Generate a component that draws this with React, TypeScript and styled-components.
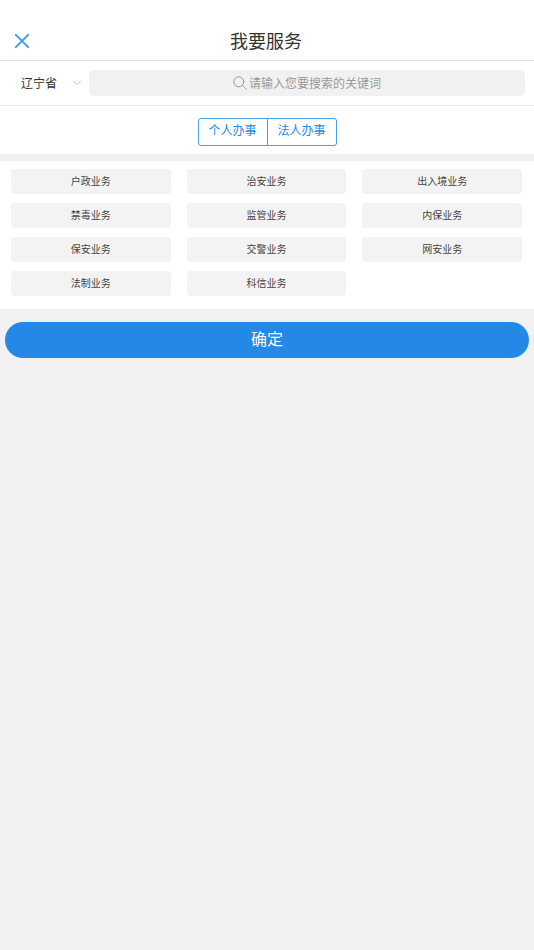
import React, { useState } from "react";
import styled, { createGlobalStyle } from "styled-components";

const GlobalStyle = createGlobalStyle`
  *, *::before, *::after { box-sizing: border-box; }
  body {
    margin: 0;
    background: #f1f1f1;
    color: #333;
    font-family: "Noto Sans CJK SC", "Noto Sans", sans-serif;
  }
  button, input, select { font: inherit; color: inherit; margin: 0; }
  button { cursor: pointer; }
`;

const Header = styled.header`
  display: grid;
  grid-template-columns: 43px 1fr 45px;
  align-items: center;
  height: 61px;
  padding-top: 20px;
  background: #fff;
  border-bottom: 1px solid #e4e4e4;
`;

const CloseButton = styled.button`
  display: flex;
  align-items: center;
  justify-content: center;
  height: 40px;
  padding: 2px 0 0;
  border: 0;
  background: none;
  color: #3d9af2;
`;

const Title = styled.h1`
  margin: 0;
  font-size: 18px;
  line-height: 26px;
  font-weight: 400;
  text-align: center;
`;

const SearchRow = styled.form`
  display: flex;
  align-items: center;
  height: 45px;
  padding-right: 9px;
  background: #fff;
  border-bottom: 1px solid #ececec;
`;

const Province = styled.label`
  display: flex;
  flex: none;
  align-items: center;
  justify-content: space-between;
  width: 89px;
  padding: 0 7px 0 21px;
  color: #c4c4c4;
`;

const ProvinceSelect = styled.select`
  appearance: none;
  padding: 0;
  border: 0;
  background: none;
  color: #333;
  font-size: 12px;
  line-height: 20px;
`;

const SearchBox = styled.label`
  display: flex;
  flex: 1;
  align-items: center;
  justify-content: center;
  gap: 2px;
  height: 26px;
  border-radius: 5px;
  background: #f1f1f1;
  color: #999;
`;

const SearchInput = styled.input`
  field-sizing: content;
  min-width: 0;
  height: 20px;
  padding: 0;
  border: 0;
  outline: 0;
  background: none;
  color: #333;
  font-size: 12px;
  line-height: 20px;
  &::placeholder { color: #999; opacity: 1; }
`;

const TabBar = styled.div`
  display: flex;
  justify-content: center;
  padding: 12px 0 8px;
  background: #fff;
`;

const TabGroup = styled.div`
  display: flex;
  border: 1px solid #4c9fe9;
  border-radius: 3px;
`;

const Tab = styled.button`
  width: 68px;
  height: 26px;
  padding: 0 0 4px;
  border: 0;
  background: none;
  color: #2388e6;
  font-size: 12px;
  line-height: 20px;
  & + & {
    width: 69px;
    border-left: 1px solid #4c9fe9;
  }
`;

const ServicePanel = styled.section`
  display: grid;
  grid-template-columns: repeat(3, 1fr);
  gap: 9px 16px;
  margin-top: 7px;
  padding: 8px 12px 13px 11px;
  background: #fff;
`;

const ServiceButton = styled.button`
  height: 25px;
  padding: 0 0 2px;
  border: 0;
  border-radius: 4px;
  background: #f3f3f3;
  color: #444;
  font-size: 10px;
  line-height: 20px;
`;

const Footer = styled.footer`
  padding: 13px 5px;
`;

const ConfirmButton = styled.button`
  display: block;
  width: 100%;
  height: 36px;
  padding: 0 0 4px;
  border: 0;
  border-radius: 18px;
  background: #2388e6;
  color: #fff;
  font-size: 16px;
  line-height: 24px;
`;

const tabs = ["个人办事", "法人办事"];

const services = [
  "户政业务", "治安业务", "出入境业务",
  "禁毒业务", "监管业务", "内保业务",
  "保安业务", "交警业务", "网安业务",
  "法制业务", "科信业务",
];

const CloseIcon = () => (
  <svg width="16" height="16" viewBox="0 0 16 16" fill="none" stroke="currentColor" strokeWidth="1.9" strokeLinecap="round" aria-hidden="true">
    <path d="M1.8 1.8 14.2 14.2M14.2 1.8 1.8 14.2" />
  </svg>
);

const ChevronIcon = () => (
  <svg width="10" height="6" viewBox="0 0 10 6" fill="none" stroke="currentColor" strokeWidth="1" aria-hidden="true">
    <path d="M1 0.8 5 4.8 9 0.8" />
  </svg>
);

const SearchIcon = () => (
  <svg width="14" height="14" viewBox="0 0 14 14" fill="none" stroke="currentColor" strokeWidth="1" strokeLinecap="round" aria-hidden="true">
    <circle cx="5.8" cy="5.8" r="5" />
    <path d="M9.5 9.5 13.4 13.4" />
  </svg>
);

export default function App() {
  const [keyword, setKeyword] = useState("");
  return (
    <>
      <GlobalStyle />
      <Header>
        <CloseButton type="button" aria-label="关闭"><CloseIcon /></CloseButton>
        <Title>我要服务</Title>
      </Header>
      <main>
        <SearchRow role="search" onSubmit={(e) => e.preventDefault()}>
          <Province>
            <ProvinceSelect aria-label="省份" defaultValue="辽宁省">
              <option>辽宁省</option>
            </ProvinceSelect>
            <ChevronIcon />
          </Province>
          <SearchBox>
            <SearchIcon />
            <SearchInput
              type="text"
              aria-label="搜索"
              placeholder="请输入您要搜索的关键词"
              value={keyword}
              onChange={(e) => setKeyword(e.target.value)}
            />
          </SearchBox>
        </SearchRow>
        <TabBar>
          <TabGroup>
            {tabs.map((name) => <Tab type="button" key={name}>{name}</Tab>)}
          </TabGroup>
        </TabBar>
        <ServicePanel>
          {services.map((name) => <ServiceButton type="button" key={name}>{name}</ServiceButton>)}
        </ServicePanel>
      </main>
      <Footer>
        <ConfirmButton type="button">确定</ConfirmButton>
      </Footer>
    </>
  );
}
